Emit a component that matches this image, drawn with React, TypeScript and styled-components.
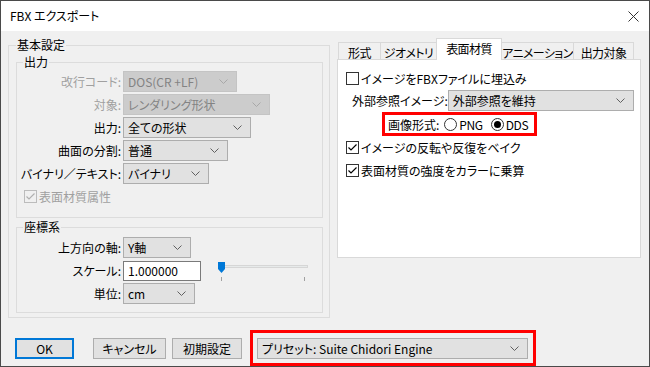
import React from "react";
import styled, { createGlobalStyle } from "styled-components";

const Global = createGlobalStyle`
  html, body { margin: 0; padding: 0; background: #ffffff; }
  body {
    font-family: "Noto Sans CJK JP", "Noto Sans", sans-serif;
    font-size: 12px;
    font-feature-settings: "palt" 1;
    color: #000;
  }
  * { box-sizing: border-box; }
`;

const Window = styled.div`
  width: 650px;
  height: 367px;
  border: 1px solid #4a4a4a;
  background: #f0f0f0;
  display: flex;
  flex-direction: column;
  overflow: hidden;
`;

const TitleBar = styled.div`
  height: 30px;
  flex-shrink: 0;
  background: #ffffff;
  display: flex;
  align-items: center;
  justify-content: space-between;
  padding: 0 10px 0 9px;
  font-size: 12px;
  line-height: 16px;
`;

const Body = styled.div`
  flex: 1;
  display: flex;
  flex-direction: column;
  padding-top: 6px;
`;

const ContentRow = styled.div`
  display: flex;
  align-items: flex-start;
  padding-left: 7px;
`;

const OuterGroup = styled.fieldset`
  width: 322px;
  margin: 0;
  padding: 1px 6px 4px 7px;
  border: 1px solid #dcdcdc;
  display: flex;
  flex-direction: column;
  gap: 1px;
  min-width: 0;
`;

const InnerGroup = styled.fieldset<{ $pt: number; $pb: number }>`
  width: 307px;
  margin: 0;
  padding: ${(p) => p.$pt}px 6px ${(p) => p.$pb}px 6px;
  border: 1px solid #dcdcdc;
  min-width: 0;
`;

const Legend = styled.legend`
  padding: 0 1px;
  font-size: 12px;
  line-height: 16px;
  height: 16px;
`;

const FormGrid = styled.div`
  display: grid;
  grid-template-columns: 98px auto;
  grid-auto-rows: 21px;
  column-gap: 2px;
  row-gap: 2px;
  align-items: center;
`;

const FieldLabel = styled.div<{ $disabled?: boolean }>`
  display: flex;
  justify-content: flex-end;
  white-space: nowrap;
  line-height: 21px;
  color: ${(p) => (p.$disabled ? "#a0a0a0" : "#000")};
`;

const ComboBox = styled.div<{ $w: number; $disabled?: boolean }>`
  width: ${(p) => p.$w}px;
  height: 21px;
  display: flex;
  align-items: center;
  justify-content: space-between;
  padding: 0 8px 0 4px;
  border: 1px solid ${(p) => (p.$disabled ? "#c4c4c4" : "#adadad")};
  background: ${(p) => (p.$disabled ? "#cccccc" : "#e1e1e1")};
  color: ${(p) => (p.$disabled ? "#838383" : "#000")};
  white-space: nowrap;
  overflow: hidden;
  line-height: 19px;
`;

const SpanAll = styled.div`
  grid-column: 1 / -1;
  padding-left: 1px;
`;

const CheckRow = styled.div<{ $disabled?: boolean }>`
  display: flex;
  align-items: center;
  gap: 2px;
  height: 18px;
  white-space: nowrap;
  color: ${(p) => (p.$disabled ? "#a0a0a0" : "#000")};
`;

const Box = styled.span<{ $disabled?: boolean }>`
  width: 13px;
  height: 13px;
  flex-shrink: 0;
  border: 1px solid ${(p) => (p.$disabled ? "#bcbcbc" : "#333333")};
  background: ${(p) => (p.$disabled ? "#f0f0f0" : "#ffffff")};
  display: flex;
  align-items: center;
  justify-content: center;
`;

const ScaleCell = styled.div`
  display: flex;
  align-items: flex-start;
  height: 21px;
`;

const TextInput = styled.div`
  width: 78px;
  height: 20px;
  margin-top: 1px;
  background: #ffffff;
  border: 1px solid #7a7a7a;
  padding-left: 4px;
  line-height: 18px;
`;

const SliderSvg = styled.svg`
  margin-left: 16px;
  overflow: visible;
  flex-shrink: 0;
`;

const RightColumn = styled.div`
  width: 304px;
  margin-left: 7px;
  margin-top: 1px;
  display: flex;
  flex-direction: column;
`;

const TabStrip = styled.div`
  height: 21px;
  display: flex;
  align-items: flex-end;
  padding-left: 1px;
`;

const Tab = styled.div<{ $w: number; $active?: boolean }>`
  width: ${(p) => p.$w}px;
  height: ${(p) => (p.$active ? 22 : 17)}px;
  margin-bottom: ${(p) => (p.$active ? -1 : 0)}px;
  & + & { margin-left: -1px; }
  border: 1px solid #d9d9d9;
  border-bottom: none;
  background: ${(p) => (p.$active ? "#ffffff" : "#f0f0f0")};
  position: relative;
  z-index: ${(p) => (p.$active ? 2 : 1)};
  display: flex;
  align-items: center;
  justify-content: center;
  padding-top: ${(p) => (p.$active ? 0 : 2)}px;
  padding-bottom: ${(p) => (p.$active ? 2 : 0)}px;
  white-space: nowrap;
  font-size: 12px;
  letter-spacing: -0.6px;
  overflow: hidden;
`;

const TabPanel = styled.div`
  height: 199px;
  background: #ffffff;
  border: 1px solid #d9d9d9;
  position: relative;
  z-index: 1;
  padding: 0 8px;
  display: flex;
  flex-direction: column;
`;

const PanelCheck = styled(CheckRow)<{ $mt: number }>`
  margin-top: ${(p) => p.$mt}px;
`;

const ExtRow = styled.div`
  margin-top: 3px;
  height: 21px;
  display: flex;
  align-items: center;
  padding-left: 6px;
  white-space: nowrap;
`;

const RedFrame = styled.div`
  border: 3px solid #ff0000;
  display: flex;
  align-items: center;
`;

const FormatBox = styled(RedFrame)`
  margin-top: 1px;
  margin-left: 36px;
  width: 155px;
  height: 24px;
  padding-left: 3px;
  white-space: nowrap;
  overflow: hidden;
`;

const RadioOption = styled.div`
  display: flex;
  align-items: center;
  gap: 2px;
  margin-left: 5px;
  letter-spacing: -0.4px;
  & + & { margin-left: 8px; }
`;

const Radio = styled.span<{ $checked?: boolean }>`
  width: 13px;
  height: 13px;
  flex-shrink: 0;
  border-radius: 50%;
  border: 1px solid #333333;
  background: #ffffff;
  display: flex;
  align-items: center;
  justify-content: center;
  &::after {
    content: "";
    width: 7px;
    height: 7px;
    border-radius: 50%;
    background: ${(p) => (p.$checked ? "#000" : "transparent")};
  }
`;

const Footer = styled.div`
  margin-top: auto;
  height: 36px;
  display: flex;
  align-items: center;
  padding-left: 14px;
`;

const Button = styled.div<{ $w: number; $default?: boolean; $ml: number }>`
  width: ${(p) => p.$w}px;
  height: 21px;
  margin-left: ${(p) => p.$ml}px;
  background: #e1e1e1;
  border: ${(p) => (p.$default ? "2px solid #0078d7" : "1px solid #adadad")};
  display: flex;
  align-items: center;
  justify-content: center;
  white-space: nowrap;
`;

const PresetFrame = styled(RedFrame)`
  margin-left: 8px;
  width: 286px;
  height: 36px;
  padding-left: 4px;
`;

const Chevron = ({ disabled }: { disabled?: boolean }) => (
  <svg width="9" height="5" viewBox="0 0 9 5" style={{ flexShrink: 0 }}>
    <polyline
      points="0.5,0.5 4.5,4.5 8.5,0.5"
      fill="none"
      stroke={disabled ? "#a8a8a8" : "#606060"}
      strokeWidth="1"
    />
  </svg>
);

const Combo = ({
  w,
  value,
  disabled,
}: {
  w: number;
  value: string;
  disabled?: boolean;
}) => (
  <ComboBox $w={w} $disabled={disabled}>
    <span>{value}</span>
    <Chevron disabled={disabled} />
  </ComboBox>
);

const Check = ({ checked, disabled }: { checked?: boolean; disabled?: boolean }) => (
  <Box $disabled={disabled}>
    {checked && (
      <svg width="11" height="11" viewBox="0 0 11 11">
        <polyline
          points="1.5,5.5 4,8 9.5,2.5"
          fill="none"
          stroke={disabled ? "#b0b0b0" : "#000"}
          strokeWidth="1.2"
        />
      </svg>
    )}
  </Box>
);

const CloseIcon = () => (
  <svg width="11" height="11" viewBox="0 0 11 11">
    <path d="M0.5 0.5 L10.5 10.5 M10.5 0.5 L0.5 10.5" stroke="#333" strokeWidth="1" fill="none" />
  </svg>
);

const outputRows = [
  { label: "改行コード:", value: "DOS(CR +LF)", w: 114, disabled: true },
  { label: "対象:", value: "レンダリング形状", w: 147, disabled: true },
  { label: "出力:", value: "全ての形状", w: 128 },
  { label: "曲面の分割:", value: "普通", w: 105 },
  { label: "バイナリ／テキスト:", value: "バイナリ", w: 86 },
];

const tabs = [
  { label: "形式", w: 43 },
  { label: "ジオメトリ", w: 57 },
  { label: "表面材質", w: 66, active: true },
  { label: "アニメーション", w: 73 },
  { label: "出力対象", w: 61 },
];

export default function App() {
  return (
    <>
      <Global />
      <Window>
        <TitleBar>
          <span>FBX エクスポート</span>
          <CloseIcon />
        </TitleBar>
        <Body>
          <ContentRow>
            <OuterGroup>
              <Legend>基本設定</Legend>
              <InnerGroup $pt={1} $pb={10}>
                <Legend>出力</Legend>
                <FormGrid>
                  {outputRows.map((r) => (
                    <React.Fragment key={r.label}>
                      <FieldLabel $disabled={r.disabled}>{r.label}</FieldLabel>
                      <Combo w={r.w} value={r.value} disabled={r.disabled} />
                    </React.Fragment>
                  ))}
                  <SpanAll>
                    <CheckRow $disabled>
                      <Check checked disabled />
                      <span>表面材質属性</span>
                    </CheckRow>
                  </SpanAll>
                </FormGrid>
              </InnerGroup>
              <InnerGroup $pt={2} $pb={8}>
                <Legend>座標系</Legend>
                <FormGrid>
                  <FieldLabel>上方向の軸:</FieldLabel>
                  <Combo w={68} value="Y軸" />
                  <FieldLabel>スケール:</FieldLabel>
                  <ScaleCell>
                    <TextInput>1.000000</TextInput>
                    <SliderSvg width="92" height="22" viewBox="0 0 92 22">
                      <rect x="3.5" y="5.5" width="87" height="2" fill="#e7eaea" stroke="#d6d6d6" />
                      <path d="M1 2 H8 V9 L4.5 13 L1 9 Z" fill="#0078d7" />
                      <line x1="4.5" y1="17" x2="4.5" y2="21" stroke="#a0a0a0" />
                      <line x1="87.5" y1="17" x2="87.5" y2="21" stroke="#a0a0a0" />
                    </SliderSvg>
                  </ScaleCell>
                  <FieldLabel>単位:</FieldLabel>
                  <Combo w={72} value="cm" />
                </FormGrid>
              </InnerGroup>
            </OuterGroup>
            <RightColumn>
              <TabStrip>
                {tabs.map((t) => (
                  <Tab key={t.label} $w={t.w} $active={t.active}>
                    {t.label}
                  </Tab>
                ))}
              </TabStrip>
              <TabPanel>
                <PanelCheck $mt={9}>
                  <Check />
                  <span>イメージをFBXファイルに埋込み</span>
                </PanelCheck>
                <ExtRow>
                  <span>外部参照イメージ:</span>
                  <div style={{ marginLeft: "auto" }}>
                    <Combo w={186} value="外部参照を維持" />
                  </div>
                </ExtRow>
                <FormatBox>
                  <span>画像形式:</span>
                  <RadioOption>
                    <Radio />
                    <span>PNG</span>
                  </RadioOption>
                  <RadioOption>
                    <Radio $checked />
                    <span>DDS</span>
                  </RadioOption>
                </FormatBox>
                <PanelCheck $mt={2}>
                  <Check checked />
                  <span>イメージの反転や反復をベイク</span>
                </PanelCheck>
                <PanelCheck $mt={5}>
                  <Check checked />
                  <span>表面材質の強度をカラーに乗算</span>
                </PanelCheck>
              </TabPanel>
            </RightColumn>
          </ContentRow>
          <Footer>
            <Button $w={59} $ml={0} $default>
              OK
            </Button>
            <Button $w={73} $ml={19}>
              キャンセル
            </Button>
            <Button $w={70} $ml={6}>
              初期設定
            </Button>
            <PresetFrame>
              <Combo w={271} value="プリセット: Suite Chidori Engine" />
            </PresetFrame>
          </Footer>
        </Body>
      </Window>
    </>
  );
}
